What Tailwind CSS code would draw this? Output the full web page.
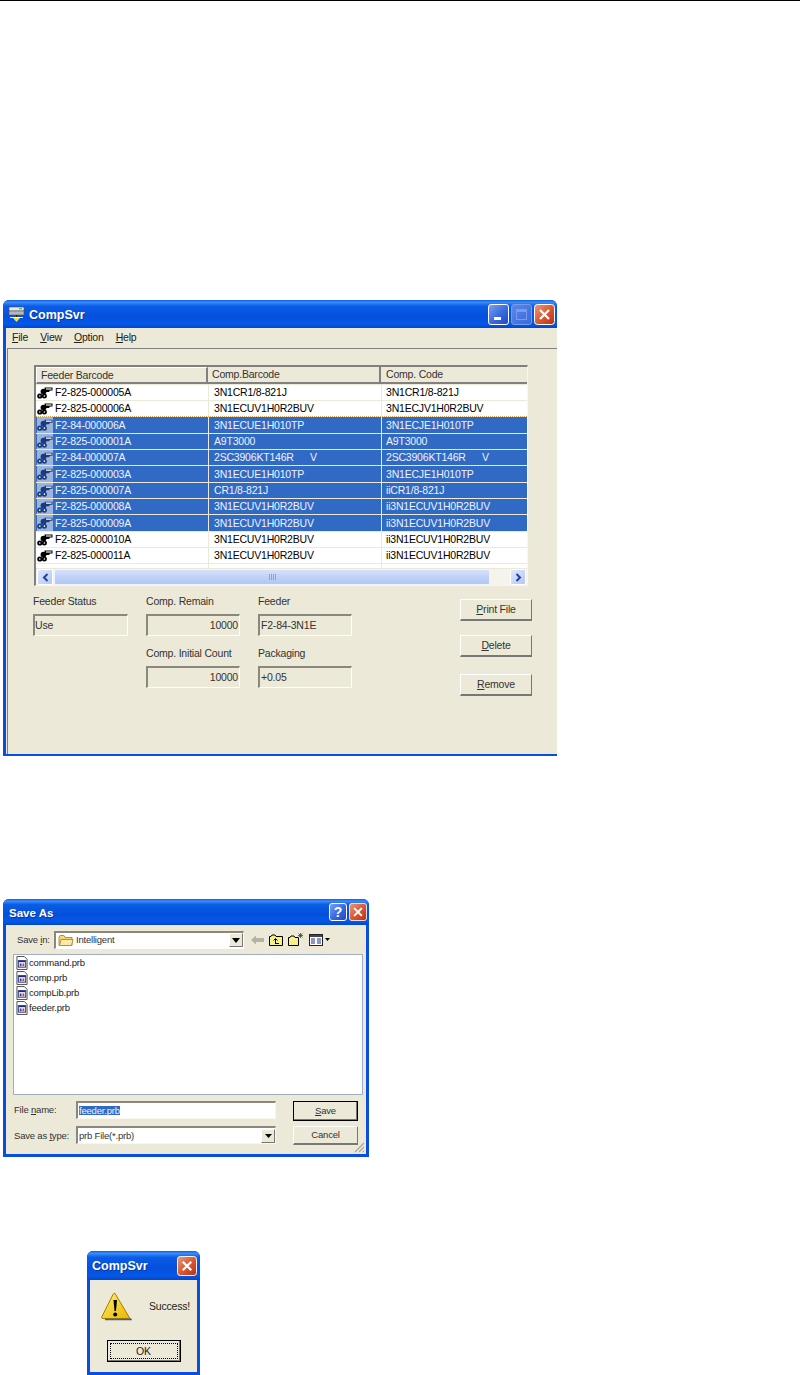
<!DOCTYPE html>
<html lang="en">
<head>
<meta charset="UTF-8">
<title>CompSvr</title>
<script src="https://cdn.jsdelivr.net/npm/@tailwindcss/browser@4"></script>
</head>
<body class="bg-white w-[800px] h-[1375px] overflow-hidden font-['Liberation_Sans',sans-serif] text-[10.5px] leading-none text-black tracking-[-0.2px]">
<svg class="absolute w-0 h-0">
  <defs>
    <linearGradient id="closeg" x1="0" y1="0" x2="1" y2="1">
      <stop offset="0" stop-color="#ea9a80"/><stop offset=".5" stop-color="#dc5a35"/><stop offset="1" stop-color="#b8300f"/>
    </linearGradient>
  </defs>
  <symbol id="feeder" viewBox="0 0 16 13">
    <circle cx="2.800" cy="10" r="2.600" fill="currentColor"/>
    <circle cx="7.400" cy="10" r="2.500" fill="currentColor"/>
    <circle cx="6.500" cy="5.600" r="2.900" fill="currentColor"/>
    <path d="M7.500 1.500H15.500V4.500H13L12 6H9.500L8 7z" fill="currentColor"/>
    <path d="M9 3H14.500" stroke="#fff" stroke-width="1.100"/>
    <circle cx="2.800" cy="10" r=".8" fill="#fff"/>
    <circle cx="7.400" cy="10" r=".8" fill="#fff"/>
  </symbol>
  <symbol id="prb" viewBox="0 0 13 15">
    <path d="M1 .5H9L12 3.500V14.500H1z" fill="#fff" stroke="#444"/>
    <rect x="2.500" y="5" width="8" height="7" fill="#fff" stroke="#1a2a7a"/>
    <rect x="3" y="5" width="7" height="1.600" fill="#1a2a7a"/>
    <rect x="4" y="8" width="2" height="3" fill="#2040c0"/>
    <rect x="7" y="8" width="2" height="3" fill="#d04020"/>
  </symbol>
  <symbol id="close" viewBox="0 0 21 21">
    <rect x=".5" y=".5" width="20" height="20" rx="3" fill="url(#closeg)" stroke="#fff"/>
    <path d="M6 6 15 15M15 6 6 15" stroke="#fff" stroke-width="2.400"/>
  </symbol>
</svg>

<!-- page rule -->
<div class="h-[1px] bg-black"></div>

<!-- CompSvr main window -->
<div class="ml-[3px] mt-[299px] w-[554px] h-[456px] flex flex-col bg-[#0a4ee0] rounded-t-[6px] pl-[3px] pb-[2px]">
  <div class="h-[28px] -ml-[3px] shrink-0 flex items-center pl-[5px] pr-[2px] rounded-t-[6px] bg-[linear-gradient(180deg,#0a5fe8_0%,#3c8cf8_8%,#0a5ce6_22%,#0450dc_60%,#0558ea_85%,#0348c8_100%)]">
    <svg width="18" height="18" viewBox="0 0 18 18" class="mr-[3px]">
      <rect x="1" y="2" width="15" height="4" rx="1" fill="#e8e8e8" stroke="#555" stroke-width=".6"/>
      <rect x="1" y="6" width="15" height="4" fill="#b8b8b8" stroke="#555" stroke-width=".6"/>
      <rect x="11" y="3" width="3" height="1.400" fill="#38d048"/>
      <path d="M8.500 10V13" stroke="#222"/>
      <path d="M2 12.500H15" stroke="#fff"/>
      <path d="M5 13H12L8.500 17z" fill="#f8e020"/>
    </svg>
    <span class="text-white font-bold text-[12.5px] tracking-[0px] pt-[2px] [text-shadow:1px_1px_0_#0838a0]">CompSvr</span>
    <div class="ml-auto flex gap-[2px]">
      <div class="w-[21px] h-[21px] rounded-[3px] border border-white bg-[linear-gradient(135deg,#7aa0f0,#3868e0_55%,#2248c0)] flex items-end pl-[5px] pb-[4px]"><div class="w-[7px] h-[3px] bg-white"></div></div>
      <div class="w-[21px] h-[21px] rounded-[3px] border border-[#7a9ce8] bg-[linear-gradient(135deg,#5a88e8,#3868e0)] p-[4px]"><div class="w-full h-full border border-[#7a9ce8] border-t-[3px]"></div></div>
      <svg width="21" height="21"><use href="#close"/></svg>
    </div>
  </div>
  <div class="flex-1 flex flex-col bg-[#ece9d8]">
    <div class="h-[20px] shrink-0 flex items-center gap-[12px] pl-[6px] pb-[1px] text-[#222]">
      <span><u>F</u>ile</span><span><u>V</u>iew</span><span><u>O</u>ption</span><span><u>H</u>elp</span>
    </div>
    <div class="flex-1 relative border-t border-l border-[#808080] ml-[1px] pt-[16px]">
      <!-- list -->
      <div class="ml-[26px] w-[494px] h-[221px] border-t-2 border-l-2 border-[#808080] border-r border-b border-r-[#f8f6ee] border-b-[#f8f6ee] flex flex-col bg-white">
        <div class="h-[17px] shrink-0 grid grid-cols-[172px_173px_1fr] bg-[#ece9d8] text-[#333]">
          <div class="border-t border-l border-white border-r-2 border-r-[#808080] border-b-2 border-b-[#808080] pl-[4px] flex items-center">Feeder Barcode</div>
          <div class="border-b-2 border-b-[#808080] border-r-2 border-r-[#808080] pl-[4px] flex items-center">Comp.Barcode</div>
          <div class="border-b-2 border-b-[#808080] pl-[5px] flex items-center">Comp. Code</div>
        </div>
        <div class="h-[0.6px] shrink-0 bg-[#ece9d8]"></div>

        <div class="h-[16.33px] shrink-0 flex border-b border-[#ece9d8] text-black">
          <div class="w-[172px] flex items-center pl-[1px] gap-[2px]"><svg width="16" height="13" class="text-black"><use href="#feeder"/></svg><span>F2-825-000005A</span></div>
          <div class="w-[173px] border-l border-[#ece9d8] pl-[5px] flex items-center">3N1CR1/8-821J</div>
          <div class="flex-1 border-l border-[#ece9d8] pl-[4px] flex items-center">3N1CR1/8-821J</div>
        </div>
        <div class="h-[16.33px] shrink-0 flex border-b border-dotted border-[#d8a860] text-black">
          <div class="w-[172px] flex items-center pl-[1px] gap-[2px]"><svg width="16" height="13" class="text-black"><use href="#feeder"/></svg><span>F2-825-000006A</span></div>
          <div class="w-[173px] border-l border-[#ece9d8] pl-[5px] flex items-center">3N1ECUV1H0R2BUV</div>
          <div class="flex-1 border-l border-[#ece9d8] pl-[4px] flex items-center">3N1ECJV1H0R2BUV</div>
        </div>
        <div class="h-[16.33px] shrink-0 flex border-b border-[#ece9d8] bg-[#316ac5] text-[#eef2fa]">
          <div class="w-[172px] flex items-center pl-[1px] gap-[2px]"><svg width="16" class="h-[15.33px] text-[#1c3c80] bg-[#9ab4de]"><use href="#feeder"/></svg><span>F2-84-000006A</span></div>
          <div class="w-[173px] border-l border-[#ece9d8] pl-[5px] flex items-center">3N1ECUE1H010TP</div>
          <div class="flex-1 border-l border-[#ece9d8] pl-[4px] flex items-center">3N1ECJE1H010TP</div>
        </div>
        <div class="h-[16.33px] shrink-0 flex border-b border-[#ece9d8] bg-[#316ac5] text-[#eef2fa]">
          <div class="w-[172px] flex items-center pl-[1px] gap-[2px]"><svg width="16" class="h-[15.33px] text-[#1c3c80] bg-[#9ab4de]"><use href="#feeder"/></svg><span>F2-825-000001A</span></div>
          <div class="w-[173px] border-l border-[#ece9d8] pl-[5px] flex items-center">A9T3000</div>
          <div class="flex-1 border-l border-[#ece9d8] pl-[4px] flex items-center">A9T3000</div>
        </div>
        <div class="h-[16.33px] shrink-0 flex border-b border-[#ece9d8] bg-[#316ac5] text-[#eef2fa]">
          <div class="w-[172px] flex items-center pl-[1px] gap-[2px]"><svg width="16" class="h-[15.33px] text-[#1c3c80] bg-[#9ab4de]"><use href="#feeder"/></svg><span>F2-84-000007A</span></div>
          <div class="w-[173px] border-l border-[#ece9d8] pl-[5px] flex items-center whitespace-pre">2SC3906KT146R      V</div>
          <div class="flex-1 border-l border-[#ece9d8] pl-[4px] flex items-center whitespace-pre">2SC3906KT146R      V</div>
        </div>
        <div class="h-[16.33px] shrink-0 flex border-b border-[#ece9d8] bg-[#316ac5] text-[#eef2fa]">
          <div class="w-[172px] flex items-center pl-[1px] gap-[2px]"><svg width="16" class="h-[15.33px] text-[#1c3c80] bg-[#9ab4de]"><use href="#feeder"/></svg><span>F2-825-000003A</span></div>
          <div class="w-[173px] border-l border-[#ece9d8] pl-[5px] flex items-center">3N1ECUE1H010TP</div>
          <div class="flex-1 border-l border-[#ece9d8] pl-[4px] flex items-center">3N1ECJE1H010TP</div>
        </div>
        <div class="h-[16.33px] shrink-0 flex border-b border-[#ece9d8] bg-[#316ac5] text-[#eef2fa]">
          <div class="w-[172px] flex items-center pl-[1px] gap-[2px]"><svg width="16" class="h-[15.33px] text-[#1c3c80] bg-[#9ab4de]"><use href="#feeder"/></svg><span>F2-825-000007A</span></div>
          <div class="w-[173px] border-l border-[#ece9d8] pl-[5px] flex items-center">CR1/8-821J</div>
          <div class="flex-1 border-l border-[#ece9d8] pl-[4px] flex items-center">iiCR1/8-821J</div>
        </div>
        <div class="h-[16.33px] shrink-0 flex border-b border-[#ece9d8] bg-[#316ac5] text-[#eef2fa]">
          <div class="w-[172px] flex items-center pl-[1px] gap-[2px]"><svg width="16" class="h-[15.33px] text-[#1c3c80] bg-[#9ab4de]"><use href="#feeder"/></svg><span>F2-825-000008A</span></div>
          <div class="w-[173px] border-l border-[#ece9d8] pl-[5px] flex items-center">3N1ECUV1H0R2BUV</div>
          <div class="flex-1 border-l border-[#ece9d8] pl-[4px] flex items-center">ii3N1ECUV1H0R2BUV</div>
        </div>
        <div class="h-[16.33px] shrink-0 flex border-b border-[#ece9d8] bg-[#316ac5] text-[#eef2fa]">
          <div class="w-[172px] flex items-center pl-[1px] gap-[2px]"><svg width="16" class="h-[15.33px] text-[#1c3c80] bg-[#9ab4de]"><use href="#feeder"/></svg><span>F2-825-000009A</span></div>
          <div class="w-[173px] border-l border-[#ece9d8] pl-[5px] flex items-center">3N1ECUV1H0R2BUV</div>
          <div class="flex-1 border-l border-[#ece9d8] pl-[4px] flex items-center">ii3N1ECUV1H0R2BUV</div>
        </div>
        <div class="h-[16.33px] shrink-0 flex border-b border-[#ece9d8] text-black">
          <div class="w-[172px] flex items-center pl-[1px] gap-[2px]"><svg width="16" height="13" class="text-black"><use href="#feeder"/></svg><span>F2-825-000010A</span></div>
          <div class="w-[173px] border-l border-[#ece9d8] pl-[5px] flex items-center">3N1ECUV1H0R2BUV</div>
          <div class="flex-1 border-l border-[#ece9d8] pl-[4px] flex items-center">ii3N1ECUV1H0R2BUV</div>
        </div>
        <div class="h-[16.33px] shrink-0 flex border-b border-[#ece9d8] text-black">
          <div class="w-[172px] flex items-center pl-[1px] gap-[2px]"><svg width="16" height="13" class="text-black"><use href="#feeder"/></svg><span>F2-825-000011A</span></div>
          <div class="w-[173px] border-l border-[#ece9d8] pl-[5px] flex items-center">3N1ECUV1H0R2BUV</div>
          <div class="flex-1 border-l border-[#ece9d8] pl-[4px] flex items-center">ii3N1ECUV1H0R2BUV</div>
        </div>
        <div class="flex-1 flex border-b border-[#ece9d8]">
          <div class="w-[172px]"></div><div class="w-[173px] border-l border-[#ece9d8]"></div><div class="flex-1 border-l border-[#ece9d8]"></div>
        </div>

        <!-- scrollbar -->
        <div class="h-[16px] shrink-0 flex bg-[#f4f3ec] p-[0_1px]">
          <div class="w-[16px] h-full rounded-[2px] border border-white bg-[linear-gradient(135deg,#dfe8fc,#b4c8f6)] text-[#24419e] flex items-center justify-center">
            <svg width="7" height="9"><path d="M5.500 1 2 4.500 5.500 8" fill="none" stroke="currentColor" stroke-width="2"/></svg>
          </div>
          <div class="w-[436px] h-full ml-[1px] rounded-[2px] border border-[#f0f4ff] bg-[linear-gradient(180deg,#d6e2fc,#c0d2f8_50%,#b2c6f4)] flex items-center justify-center gap-[1px]">
            <i class="w-[1px] h-[6px] bg-[#8aa2de]"></i><i class="w-[1px] h-[6px] bg-[#8aa2de]"></i><i class="w-[1px] h-[6px] bg-[#8aa2de]"></i><i class="w-[1px] h-[6px] bg-[#8aa2de]"></i>
          </div>
          <div class="flex-1"></div>
          <div class="w-[16px] h-full rounded-[2px] border border-white bg-[linear-gradient(135deg,#dfe8fc,#b4c8f6)] text-[#24419e] flex items-center justify-center">
            <svg width="7" height="9"><path d="M1.500 1 5 4.500 1.500 8" fill="none" stroke="currentColor" stroke-width="2"/></svg>
          </div>
        </div>
      </div>

      <!-- detail fields -->
      <div class="ml-[25px] mt-[5px] flex text-[#333]">
        <div class="w-[113px] flex flex-col">
          <div class="h-[20px] flex items-center">Feeder Status</div>
          <div class="mt-[3px] w-[95px] h-[22px] bg-[#ece9d8] border-t-2 border-l-2 border-t-[#8a887c] border-l-[#8a887c] border-r border-b border-r-white border-b-white flex items-center">Use</div>
        </div>
        <div class="w-[112px] flex flex-col">
          <div class="h-[20px] flex items-center">Comp. Remain</div>
          <div class="mt-[3px] w-[94px] h-[22px] bg-[#ece9d8] border-t-2 border-l-2 border-t-[#8a887c] border-l-[#8a887c] border-r border-b border-r-white border-b-white pr-[1px] flex items-center justify-end">10000</div>
          <div class="mt-[7px] h-[20px] flex items-center">Comp. Initial Count</div>
          <div class="mt-[3px] w-[94px] h-[22px] bg-[#ece9d8] border-t-2 border-l-2 border-t-[#8a887c] border-l-[#8a887c] border-r border-b border-r-white border-b-white pr-[1px] flex items-center justify-end">10000</div>
        </div>
        <div class="w-[202px] flex flex-col">
          <div class="h-[20px] flex items-center">Feeder</div>
          <div class="mt-[3px] w-[94px] h-[22px] bg-[#ece9d8] border-t-2 border-l-2 border-t-[#8a887c] border-l-[#8a887c] border-r border-b border-r-white border-b-white pl-[1px] flex items-center">F2-84-3N1E</div>
          <div class="mt-[7px] h-[20px] flex items-center">Packaging</div>
          <div class="mt-[3px] w-[94px] h-[22px] bg-[#ece9d8] border-t-2 border-l-2 border-t-[#8a887c] border-l-[#8a887c] border-r border-b border-r-white border-b-white pl-[1px] flex items-center">+0.05</div>
        </div>
        <div class="w-[72px] pt-[8px] flex flex-col">
          <div class="h-[22px] border-t border-l border-white border-r border-b-2 border-r-[#777] border-b-[#777] flex items-center justify-center"><span><u>P</u>rint File</span></div>
          <div class="mt-[14px] h-[22px] border-t border-l border-white border-r border-b-2 border-r-[#777] border-b-[#777] flex items-center justify-center"><span><u>D</u>elete</span></div>
          <div class="mt-[17px] h-[22px] border-t border-l border-white border-r border-b-2 border-r-[#777] border-b-[#777] flex items-center justify-center"><span><u>R</u>emove</span></div>
        </div>
      </div>
    </div>
  </div>
</div>

<!-- Save As dialog -->
<div class="ml-[3px] mt-[143px] w-[366px] h-[258px] flex flex-col bg-[#0a4ee0] rounded-t-[6px] px-[3px] pb-[3px]">
  <div class="h-[26px] -mx-[3px] shrink-0 flex items-center pl-[6px] pr-[2px] rounded-t-[6px] bg-[linear-gradient(180deg,#0a5fe8_0%,#3c8cf8_8%,#0a5ce6_22%,#0450dc_60%,#0558ea_85%,#0348c8_100%)]">
    <span class="text-white font-bold text-[11.5px] tracking-[0px] pt-[4px] [text-shadow:1px_1px_0_#0838a0]">Save As</span>
    <div class="ml-auto flex gap-[2px]">
      <div class="w-[18px] h-[18px] rounded-[3px] border border-white bg-[linear-gradient(135deg,#7aa0f0,#3868e0_55%,#2248c0)] flex items-center justify-center text-white font-bold text-[14px]">?</div>
      <svg width="18" height="18" viewBox="0 0 21 21"><use href="#close"/></svg>
    </div>
  </div>
  <div class="flex-1 flex flex-col bg-[#ece9d8] px-[7px] relative text-[9.5px] text-[#333]">
    <div class="h-[29px] shrink-0 flex items-center">
      <span class="w-[41px] pl-[4px] whitespace-nowrap">Save <u>i</u>n:</span>
      <div class="w-[190px] h-[18px] bg-white border-t-2 border-l-2 border-[#8a887c] border-r border-b border-r-white border-b-white flex items-center pl-[2px] gap-[2px]">
        <svg width="16" height="13" viewBox="0 0 16 13"><path d="M1 3V11.500H14V3.500H7L6 1.500H2z" fill="#f6d878" stroke="#b09040"/><path d="M1.500 11.500 3 5.500H15L13.500 11.500z" fill="#fbe9a8" stroke="#b09040"/></svg>
        <span>Intelligent</span>
        <div class="ml-auto w-[14px] h-[14px] bg-[#ece9d8] border border-t-white border-l-white border-r-[#777] border-b-[#777] flex items-center justify-center">
          <svg width="8" height="5"><path d="M0 0H8L4 5z" fill="#000"/></svg>
        </div>
      </div>
      <div class="ml-[7px] flex items-center gap-[5px]">
        <svg width="13" height="10" viewBox="0 0 13 10"><path d="M0 5 5 .5V3H13V7H5V9.500z" fill="#b4b2a4"/></svg>
        <svg width="14" height="12" viewBox="0 0 14 12"><path d="M.5 11.500V2.500H2L3 1H6L7 2.500H13.500V11.500z" fill="#f8f088" stroke="#000"/><path d="M6.500 10V5M4.500 6.500 6.500 4.500 8.500 6.500M6.500 9.500H10" fill="none" stroke="#000"/></svg>
        <svg width="16" height="13" viewBox="0 0 16 13"><path d="M.5 12.500V4.500H2L3 3H6L7 4.500H10.500V12.500z" fill="#f8f088" stroke="#000"/><path d="M12.500 0V5M10 2.500H15M10.500 .5 14.500 4.500M14.500 .5 10.500 4.500" stroke="#333" stroke-width=".7"/></svg>
        <div class="flex items-center gap-[2px]">
          <svg width="14" height="12" viewBox="0 0 14 12"><rect x=".5" y=".5" width="13" height="11" fill="#fff" stroke="#222"/><rect x="1" y="1" width="12" height="2" fill="#445"/><path d="M2 5H6M8 5H12M2 7H6M8 7H12M2 9H6M8 9H12" stroke="#1a2a9a"/></svg>
          <svg width="5" height="3"><path d="M0 0H5L2.500 3z" fill="#000"/></svg>
        </div>
      </div>
    </div>
    <div class="h-[141px] w-[350px] bg-white border border-[#9fb0c4] pl-[2px] text-[#222]">
      <div class="h-[15px] flex items-center gap-[1px]"><svg width="12" height="14"><use href="#prb"/></svg>command.prb</div>
      <div class="h-[15px] flex items-center gap-[1px]"><svg width="12" height="14"><use href="#prb"/></svg>comp.prb</div>
      <div class="h-[15px] flex items-center gap-[1px]"><svg width="12" height="14"><use href="#prb"/></svg>compLib.prb</div>
      <div class="h-[15px] flex items-center gap-[1px]"><svg width="12" height="14"><use href="#prb"/></svg>feeder.prb</div>
    </div>
    <div class="flex mt-[6px]">
      <div class="w-[63px] flex flex-col pl-[1px]">
        <div class="h-[17px] flex items-center whitespace-nowrap"><span>File <u>n</u>ame:</span></div>
        <div class="mt-[9px] h-[17px] flex items-center whitespace-nowrap"><span>Save as <u>t</u>ype:</span></div>
      </div>
      <div class="w-[200px] flex flex-col">
        <div class="h-[18px] bg-white border-t-2 border-l-2 border-[#8a887c] border-r border-b border-r-[#f8f6ee] border-b-[#f8f6ee] flex items-center pl-[0.5px]"><span class="bg-[#316ac5] text-[#eef2fa] px-[0.5px]">feeder.prb</span></div>
        <div class="mt-[7px] h-[18px] bg-white border-t-2 border-l-2 border-[#8a887c] border-r border-b border-r-[#f8f6ee] border-b-[#f8f6ee] flex items-center pl-[1px]"><span>prb File(*.prb)</span>
          <div class="ml-auto w-[14px] h-[14px] bg-[#ece9d8] border border-t-white border-l-white border-r-[#777] border-b-[#777] flex items-center justify-center">
            <svg width="7" height="4"><path d="M0 0H7L3.500 4z" fill="#000"/></svg>
          </div>
        </div>
      </div>
      <div class="w-[65px] ml-[17px] flex flex-col">
        <div class="h-[20px] border border-black shadow-[inset_-1px_-1px_0_#777] flex items-center justify-center"><span><u>S</u>ave</span></div>
        <div class="mt-[5px] h-[19px] border-t border-l border-white border-r border-b-2 border-r-[#777] border-b-[#777] flex items-center justify-center">Cancel</div>
      </div>
    </div>
    <svg width="11" height="11" class="absolute right-[1px] bottom-[1px]"><path d="M10 1 1 10M10 5 5 10M10 9 9 10" stroke="#aca899" stroke-width="1.200"/></svg>
  </div>
</div>

<!-- Success box -->
<div class="ml-[87px] mt-[94px] w-[113px] h-[124px] flex flex-col bg-[#0a4ee0] rounded-t-[6px] px-[3px] pb-[3px]">
  <div class="h-[29px] -mx-[3px] shrink-0 flex items-center pl-[5px] pr-[3px] rounded-t-[6px] bg-[linear-gradient(180deg,#0a5fe8_0%,#3c8cf8_8%,#0a5ce6_22%,#0450dc_60%,#0558ea_85%,#0348c8_100%)]">
    <span class="text-white font-bold text-[12.5px] tracking-[0px] pt-[2px] [text-shadow:1px_1px_0_#0838a0]">CompSvr</span>
    <svg width="20" height="20" viewBox="0 0 21 21" class="ml-auto"><use href="#close"/></svg>
  </div>
  <div class="flex-1 bg-[#ece9d8] flex flex-col items-center">
    <div class="w-full flex items-center mt-[12px] pl-[10px]">
      <svg width="32" height="29" viewBox="0 0 32 29">
        <defs><linearGradient id="warn" x1="0" y1="0" x2="1" y2="1"><stop offset="0" stop-color="#fff26a"/><stop offset="1" stop-color="#e8b400"/></linearGradient></defs>
        <path d="M15 1.500 30 26.500H2.500Q1 26.500 2 24.500L13 2.500Q14 .5 15 1.500z" fill="url(#warn)" stroke="#a08000"/>
        <path d="M30 26.500 31 27.500H5" fill="none" stroke="#5a5a80" stroke-width="1.500"/>
        <path d="M13.500 8H17L16 19H14.500z" fill="#000"/><circle cx="15.200" cy="22.500" r="2" fill="#000"/>
      </svg>
      <span class="ml-[17px] text-[#222]">Success!</span>
    </div>
    <div class="mt-[19px] w-[74px] h-[22px] border border-black shadow-[inset_-1px_-1px_0_#777] p-[2px] text-[#222]">
      <div class="w-full h-full border border-dotted border-black flex items-center justify-center">OK</div>
    </div>
  </div>
</div>
</body>
</html>
